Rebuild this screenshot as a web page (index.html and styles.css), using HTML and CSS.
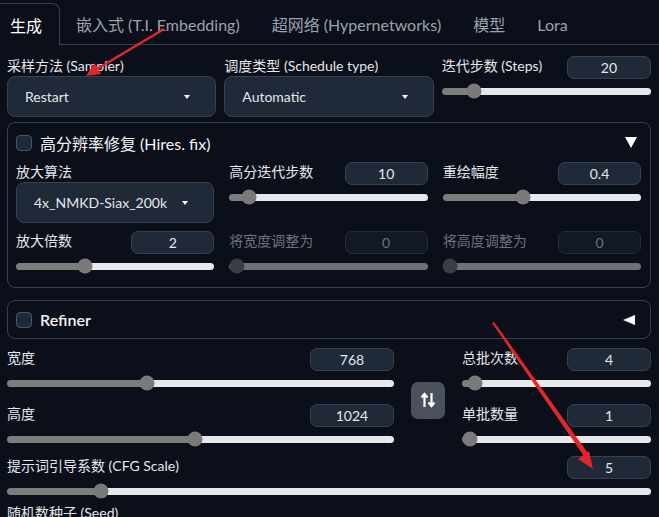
FILE: index.html
```html
<!DOCTYPE html>
<html lang="zh">
<head>
  <meta charset="UTF-8">
  <title>txt2img</title>
  <link rel="stylesheet" href="styles.css">
</head>
<body>
  <div class="tabs">
    <div class="tab active">生成</div>
    <div class="tab">嵌入式 (T.I. Embedding)</div>
    <div class="tab">超网络 (Hypernetworks)</div>
    <div class="tab">模型</div>
    <div class="tab">Lora</div>
  </div>

  <div class="panel">
    <div class="row3">
      <div class="field">
        <div class="label">采样方法 (Sampler)</div>
        <div class="dropdown"><span>Restart</span><span class="caret"></span></div>
      </div>
      <div class="field">
        <div class="label">调度类型 (Schedule type)</div>
        <div class="dropdown"><span>Automatic</span><span class="caret"></span></div>
      </div>
      <div class="field">
        <div class="head"><span class="label">迭代步数 (Steps)</span><span class="num">20</span></div>
        <div class="slider-wrap"><div class="slider" style="--f:0.128"><span class="thumb"></span></div></div>
      </div>
    </div>

    <div class="accordion hires">
      <div class="acc-head">
        <span class="checkbox"></span>
        <span class="acc-title">高分辨率修复 (Hires. fix)</span>
        <svg class="acc-icon" width="12" height="11" viewBox="0 0 12 11"><polygon points="0,0 12,0 6,11" fill="#fff"/></svg>
      </div>
      <div class="grid3">
        <div class="field">
          <div class="label">放大算法</div>
          <div class="dropdown small"><span>4x_NMKD-Siax_200k</span><span class="caret"></span></div>
        </div>
        <div class="field">
          <div class="head"><span class="label">高分迭代步数</span><span class="num">10</span></div>
          <div class="slider-wrap"><div class="slider" style="--f:0.067"><span class="thumb"></span></div></div>
        </div>
        <div class="field">
          <div class="head"><span class="label">重绘幅度</span><span class="num">0.4</span></div>
          <div class="slider-wrap"><div class="slider" style="--f:0.4"><span class="thumb"></span></div></div>
        </div>
        <div class="field">
          <div class="head"><span class="label">放大倍数</span><span class="num">2</span></div>
          <div class="slider-wrap"><div class="slider" style="--f:0.333"><span class="thumb"></span></div></div>
        </div>
        <div class="field off">
          <div class="head"><span class="label">将宽度调整为</span><span class="num">0</span></div>
          <div class="slider-wrap"><div class="slider" style="--f:0"><span class="thumb"></span></div></div>
        </div>
        <div class="field off">
          <div class="head"><span class="label">将高度调整为</span><span class="num">0</span></div>
          <div class="slider-wrap"><div class="slider" style="--f:0"><span class="thumb"></span></div></div>
        </div>
      </div>
    </div>

    <div class="accordion refiner">
      <div class="acc-head">
        <span class="checkbox"></span>
        <span class="acc-title bold">Refiner</span>
        <svg class="acc-icon" width="12" height="10" viewBox="0 0 12 10"><polygon points="12,0 12,10 0,5" fill="#fff"/></svg>
      </div>
    </div>

    <div class="dims">
      <div class="stack">
        <div class="field">
          <div class="head"><span class="label">宽度</span><span class="num">768</span></div>
          <div class="slider-wrap"><div class="slider" style="--f:0.355"><span class="thumb"></span></div></div>
        </div>
        <div class="field">
          <div class="head"><span class="label">高度</span><span class="num">1024</span></div>
          <div class="slider-wrap"><div class="slider" style="--f:0.484"><span class="thumb"></span></div></div>
        </div>
      </div>
      <div class="swap-col">
        <button class="swap">
          <svg width="16" height="18" viewBox="0 0 16 18"><path d="M4.5 16V3M1.5 6.5L4.5 3L7.5 6.5M11.5 2V15M8.5 11.5L11.5 15L14.5 11.5" stroke="#fff" stroke-width="2.2" fill="none"/></svg>
        </button>
      </div>
      <div class="stack">
        <div class="field">
          <div class="head"><span class="label">总批次数</span><span class="num">4</span></div>
          <div class="slider-wrap"><div class="slider" style="--f:0.03"><span class="thumb"></span></div></div>
        </div>
        <div class="field">
          <div class="head"><span class="label">单批数量</span><span class="num">1</span></div>
          <div class="slider-wrap"><div class="slider" style="--f:0"><span class="thumb"></span></div></div>
        </div>
      </div>
    </div>

    <div class="field cfg">
      <div class="head"><span class="label">提示词引导系数 (CFG Scale)</span><span class="num">5</span></div>
      <div class="slider-wrap"><div class="slider" style="--f:0.138"><span class="thumb"></span></div></div>
    </div>

    <div class="label seed">随机数种子 (Seed)</div>
  </div>

  <!-- 标注箭头 -->
  <svg class="marks" width="659" height="517" viewBox="0 0 659 517">
    <line x1="164" y1="29" x2="97" y2="69" stroke="#e3262b" stroke-width="2.6"/>
    <polygon points="86,76 101,74 94.5,63" fill="#e3262b"/>
    <polygon points="492,323 494,322 590,456 586,459" fill="#e3262b"/>
    <polygon points="593,469 578,459 589,451" fill="#e3262b"/>
  </svg>
</body>
</html>
```

FILE: styles.css
```css
* {
  box-sizing: border-box;
}

body {
  margin: 0;
  background: #0b0f19;
  color: #e5e7eb;
  font-family: Lato, 'Noto Sans CJK SC', sans-serif;
  font-size: 14px;
  width: 659px;
  height: 517px;
  overflow: hidden;
  position: relative;
}

.tabs {
  display: flex;
  height: 45px;
  padding-top: 3px;
  border-bottom: 1px solid #374151;
}

.tab {
  padding: 2px 16px 0;
  font-size: 16px;
  line-height: 40px;
  color: #9ca3af;
}

.tab.active {
  margin-left: -6px;
  margin-bottom: -1px;
  padding-right: 17px;
  color: #fff;
  background: #0b0f19;
  border: 1px solid #374151;
  border-left: none;
  border-bottom: none;
  border-radius: 0 8px 0 0;
}

.panel {
  padding: 11px 8px 0 7px;
}

.label {
  line-height: 20px;
  white-space: nowrap;
}

.field.off .label {
  color: #6b7280;
}

.row3 {
  display: grid;
  grid-template-columns: repeat(3, 1fr);
  gap: 8px;
  align-items: start;
}

.dropdown {
  height: 41px;
  display: flex;
  align-items: center;
  justify-content: space-between;
  padding: 0 25px 0 17px;
  background: #1f2937;
  border: 1px solid #374151;
  border-radius: 8px;
}

.caret {
  width: 0;
  height: 0;
  border-left: 3.5px solid transparent;
  border-right: 3.5px solid transparent;
  border-top: 4px solid #fff;
}

.head {
  display: flex;
  justify-content: space-between;
  align-items: flex-start;
  height: 23px;
}

.num {
  width: 84px;
  height: 23px;
  line-height: 21px;
  text-align: center;
  background: #1f2937;
  border: 1px solid #374151;
  border-radius: 7px;
}

.field.off .num {
  background: #131826;
  color: #6b7280;
  border-color: #262d3a;
}

.slider-wrap {
  height: 24px;
  display: flex;
  align-items: center;
}

.slider {
  position: relative;
  flex: 1;
  height: 7px;
  border-radius: 4px;
  --x: calc(7.5px + (100% - 15px) * var(--f));
  background: linear-gradient(to right, #7d7d7d var(--x), #e7e8eb var(--x));
}

.thumb {
  position: absolute;
  top: 50%;
  left: calc(7.5px + (100% - 15px) * var(--f));
  width: 15px;
  height: 15px;
  border-radius: 50%;
  background: #7a7a7a;
  transform: translate(-50%, -50%);
}

.field.off .slider {
  background: #6e7077;
}

.field.off .thumb {
  background: #3a3d44;
}

.accordion {
  border: 1px solid #374151;
  border-radius: 8px;
  padding: 0 9px 0 8px;
}

.hires {
  margin-top: 5px;
  padding-bottom: 9px;
}

.acc-head {
  display: flex;
  align-items: center;
  height: 39px;
}

.refiner .acc-head {
  height: 37px;
}

.checkbox {
  width: 16px;
  height: 16px;
  background: #1f2937;
  border: 1px solid #4b5563;
  border-radius: 4px;
  margin-right: 8px;
}

.acc-title {
  flex: 1;
  font-size: 16px;
  color: #f3f4f6;
}

.acc-title.bold {
  font-weight: 600;
}

.acc-icon {
  margin-right: 4px;
}

.refiner .acc-icon {
  margin-right: 6px;
}

.grid3 {
  display: grid;
  grid-template-columns: repeat(3, 1fr);
  column-gap: 15px;
  row-gap: 8px;
  align-items: start;
}

.grid3 .num {
  width: 83px;
}

.refiner {
  margin-top: 12px;
}

.dims {
  display: grid;
  grid-template-columns: 1fr 68px 189px;
  margin-top: 9px;
}

.stack {
  display: flex;
  flex-direction: column;
  gap: 9px;
}

.swap-col {
  display: flex;
  align-items: center;
  justify-content: center;
}

.swap {
  width: 34px;
  height: 37px;
  margin-top: 1px;
  border: none;
  border-radius: 7px;
  background: #4b505d;
  display: flex;
  align-items: center;
  justify-content: center;
  padding: 0;
}

.cfg {
  margin-top: 5px;
}

.marks {
  position: absolute;
  top: 0;
  left: 0;
  pointer-events: none;
}
```
